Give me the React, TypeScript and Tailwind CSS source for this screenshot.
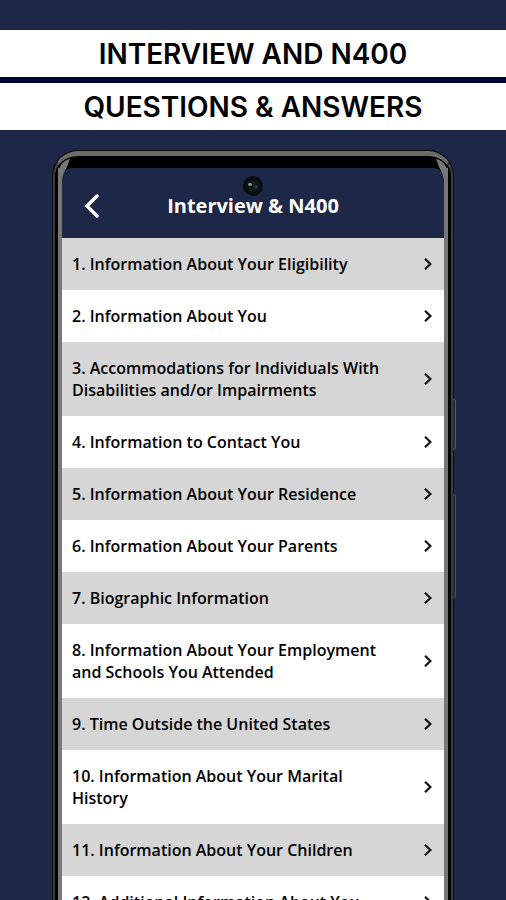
import React from "react";

const sections: string[] = [
  "1. Information About Your Eligibility",
  "2. Information About You",
  "3. Accommodations for Individuals With Disabilities and/or Impairments",
  "4. Information to Contact You",
  "5. Information About Your Residence",
  "6. Information About Your Parents",
  "7. Biographic Information",
  "8. Information About Your Employment and Schools You Attended",
  "9. Time Outside the United States",
  "10. Information About Your Marital History",
  "11. Information About Your Children",
  "12. Additional Information About You",
];

function Chevron() {
  return (
    <svg viewBox="0 0 8 12" className="h-3 w-2 shrink-0" fill="none" stroke="#111" strokeWidth="2.2" aria-hidden="true">
      <path d="M1 0.8 L6.4 6 L1 11.2" />
    </svg>
  );
}

function CornerGlint({ className }: { className: string }) {
  return (
    <svg viewBox="0 0 16 32" className={`absolute top-0 h-8 w-4 ${className}`} aria-hidden="true">
      <path d="M12 3 C5 4 0 11 0 20 L0 32 L4 32 L4 24 C5 17 8 13 9 11 Z" fill="#777776" />
    </svg>
  );
}

function Camera() {
  return (
    <svg viewBox="0 0 20 20" className="absolute top-5 left-1/2 h-5 w-5 -translate-x-1/2" aria-hidden="true">
      <circle cx="10" cy="10" r="10" fill="#0b0e10" />
      <circle cx="10" cy="10" r="6" fill="#11191b" />
      <ellipse cx="7" cy="8.5" rx="2" ry="1.4" fill="#8a9291" />
      <ellipse cx="13" cy="11" rx="1.3" ry="2" fill="#15406a" />
    </svg>
  );
}

function Banner() {
  return (
    <h1 className="flex flex-col gap-[6px] bg-[#02073a] text-center font-['Inter',sans-serif] text-[28px] leading-[46px] font-semibold text-black">
      <span className="block bg-white pt-px">INTERVIEW AND N400</span>
      <span className="block bg-white pt-px">QUESTIONS &amp; ANSWERS</span>
    </h1>
  );
}

function Phone() {
  return (
    <div className="relative mx-[52px] mt-5 rounded-t-[26px] bg-[#0b0d0f] p-px pb-0">
      <div className="absolute top-[249px] -right-[2px] h-[51px] w-[3px] rounded-r-sm border border-l-0 border-[#555b68] bg-[#232a3d]" />
      <div className="absolute top-[344px] -right-[2px] h-[104px] w-[3px] rounded-r-sm border border-l-0 border-[#4a505d] bg-[#232a3d]" />
      <div className="relative rounded-t-[25px] border-x-2 border-t-[5px] border-[#3b3c3c] border-t-[#6c6b6a] bg-black px-[3px] pt-3">
        <div className="mt-5 border-x-4 border-[#777776]">
          <div className="-mt-5">
            <Screen />
          </div>
        </div>
        <CornerGlint className="left-[3px]" />
        <CornerGlint className="right-[3px] -scale-x-100" />
        <Camera />
      </div>
    </div>
  );
}

function Screen() {
  return (
    <main className="relative rounded-t-[10px] bg-[#1d2747] font-['Open_Sans',sans-serif]">
      <header className="grid h-[70px] grid-cols-[60px_1fr_60px] items-center pt-1.5">
        <button type="button" aria-label="Back" className="flex h-11 items-center justify-center">
          <svg viewBox="0 0 16 24" className="h-6 w-4" fill="none" stroke="white" strokeWidth="3.4" strokeLinecap="round" aria-hidden="true">
            <path d="M13 2 L3 12 L13 22" />
          </svg>
        </button>
        <h2 className="text-center text-xl font-bold whitespace-nowrap text-white">Interview &amp; N400</h2>
      </header>
      <ul>
        {sections.map((title) => (
          <li key={title} className="bg-white odd:bg-[#d6d6d6]">
            <button
              type="button"
              className="flex w-full items-center justify-between py-[15px] pr-3 pl-[10px] text-left text-base leading-[22px] font-semibold text-black"
            >
              <span className="max-w-[325px]">{title}</span>
              <Chevron />
            </button>
          </li>
        ))}
      </ul>
    </main>
  );
}

export default function App() {
  return (
    <div className="h-screen overflow-hidden bg-[#1d2747] pt-[30px]">
      <Banner />
      <Phone />
    </div>
  );
}
